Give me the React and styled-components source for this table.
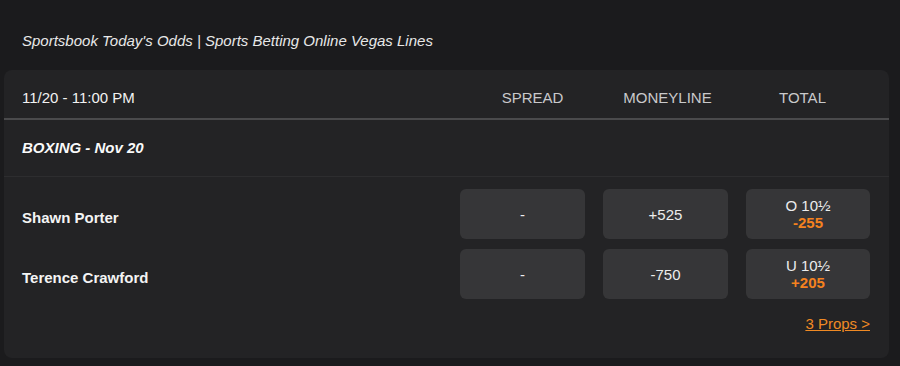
import React from "react";
import styled, { createGlobalStyle } from "styled-components";

const GlobalStyle = createGlobalStyle`
  body {
    margin: 0;
    background: #1b1b1d;
    font-family: "Liberation Sans", Arial, sans-serif;
    color: #ececec;
  }
`;

const Page = styled.div`
  width: 900px;
  height: 366px;
  overflow: hidden;
`;

const Title = styled.h1`
  margin: 0;
  padding: 32px 0 0 22px;
  height: 38px;
  font-size: 15px;
  line-height: 18px;
  font-weight: normal;
  font-style: italic;
  color: #e8e8e8;
`;

const Card = styled.div`
  margin: 0 11px 0 4px;
  height: 288px;
  background: #232325;
  border-radius: 8px;
  display: flex;
  flex-direction: column;
`;

const HeaderRow = styled.div`
  display: grid;
  grid-template-columns: 1fr 135px 135px 135px;
  align-items: center;
  padding: 8px 19px 0 18px;
  height: 40px;
  border-bottom: 2px solid #4a4a4c;
  font-size: 15px;
  line-height: 20px;
`;

const DateLabel = styled.div`
  color: #f2f2f2;
`;

const ColLabel = styled.div`
  text-align: center;
  color: #c9c9cb;
  text-transform: uppercase;
`;

const Sport = styled.div`
  height: 54px;
  padding: 0 0 2px 18px;
  display: flex;
  align-items: center;
  font-size: 15px;
  font-weight: bold;
  font-style: italic;
  color: #fafafa;
  border-bottom: 1px solid #2d2d2f;
`;

const Lines = styled.div`
  display: flex;
  flex-direction: column;
  gap: 10px;
  padding: 12px 19px 0 18px;
`;

const Row = styled.div`
  display: grid;
  grid-template-columns: 1fr 125px 125px 124px;
  column-gap: 18px;
  height: 50px;
`;

const Name = styled.div`
  padding-top: 20px;
  font-size: 15px;
  line-height: 18px;
  font-weight: bold;
  color: #f4f4f4;
`;

const Odds = styled.div`
  background: #363638;
  border-radius: 6px;
  display: flex;
  flex-direction: column;
  align-items: center;
  justify-content: center;
  font-size: 15px;
  line-height: 17px;
  color: #ececec;
`;

const Price = styled.span`
  color: #f5821f;
  font-weight: bold;
`;

const Footer = styled.div`
  display: flex;
  justify-content: flex-end;
  padding: 16px 19px 0 0;
`;

const PropsLink = styled.a`
  font-size: 15px;
  line-height: 18px;
  color: #f08a24;
  text-decoration: underline;
  cursor: pointer;
`;

const rows = [
  { name: "Shawn Porter", spread: "-", money: "+525", total: "O 10½", price: "-255" },
  { name: "Terence Crawford", spread: "-", money: "-750", total: "U 10½", price: "+205" },
];

export default function App() {
  return (
    <Page>
      <GlobalStyle />
      <Title>Sportsbook Today's Odds | Sports Betting Online Vegas Lines</Title>
      <Card>
        <HeaderRow>
          <DateLabel>11/20 - 11:00 PM</DateLabel>
          <ColLabel>Spread</ColLabel>
          <ColLabel>Moneyline</ColLabel>
          <ColLabel>Total</ColLabel>
        </HeaderRow>
        <Sport>BOXING - Nov 20</Sport>
        <Lines>
          {rows.map((r) => (
            <Row key={r.name}>
              <Name>{r.name}</Name>
              <Odds>{r.spread}</Odds>
              <Odds>{r.money}</Odds>
              <Odds>
                <span>{r.total}</span>
                <Price>{r.price}</Price>
              </Odds>
            </Row>
          ))}
        </Lines>
        <Footer>
          <PropsLink>3 Props &gt;</PropsLink>
        </Footer>
      </Card>
    </Page>
  );
}
